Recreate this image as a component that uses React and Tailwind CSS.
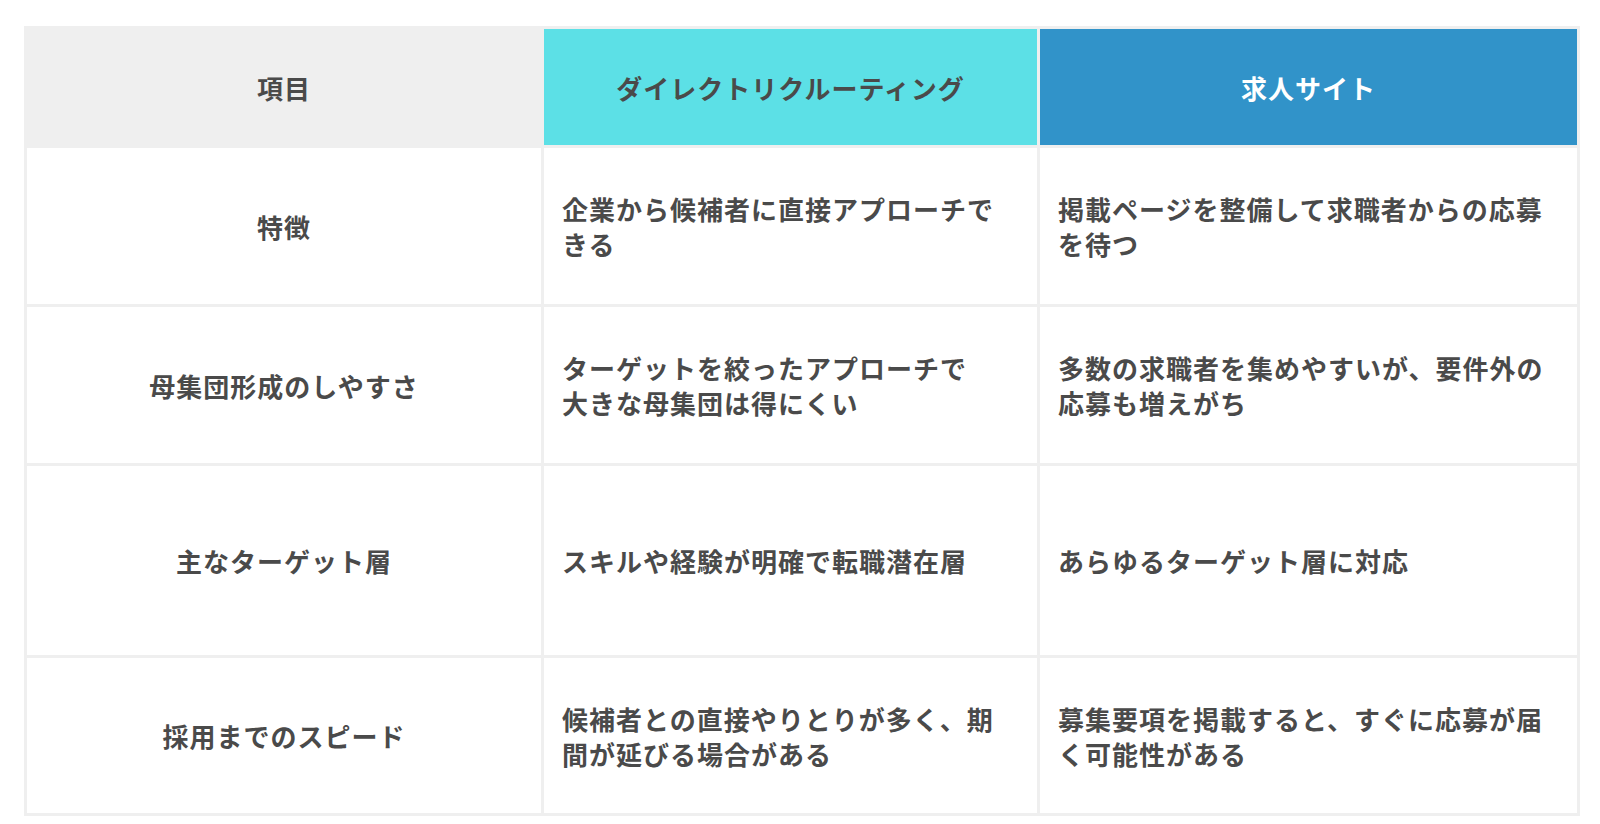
import React from "react";

const font = { fontFamily: '"Noto Sans CJK JP", "Noto Sans", sans-serif' };

const rows = [
  {
    h: "h-[156px]",
    label: "特徴",
    a: ["企業から候補者に直接アプローチで", "きる"],
    b: ["掲載ページを整備して求職者からの応募", "を待つ"],
  },
  {
    h: "h-[156px]",
    label: "母集団形成のしやすさ",
    a: ["ターゲットを絞ったアプローチで", "大きな母集団は得にくい"],
    b: ["多数の求職者を集めやすいが、要件外の", "応募も増えがち"],
  },
  {
    h: "h-[189px]",
    label: "主なターゲット層",
    a: ["スキルや経験が明確で転職潜在層"],
    b: ["あらゆるターゲット層に対応"],
  },
  {
    h: "h-[155px]",
    label: "採用までのスピード",
    a: ["候補者との直接やりとりが多く、期", "間が延びる場合がある"],
    b: ["募集要項を掲載すると、すぐに応募が届", "く可能性がある"],
  },
];

function Lines({ lines }) {
  return (
    <div>
      {lines.map((l, i) => (
        <div key={i} className="whitespace-nowrap">
          {l}
        </div>
      ))}
    </div>
  );
}

export default function App() {
  return (
    <div className="min-h-screen w-full bg-white pt-[26px] pl-[24px]" style={font}>
      <div className="w-[1556px] bg-[#efefef] p-[3px] grid grid-cols-[514px_493px_537px] gap-[3px] text-[26px] leading-[35px] font-bold tracking-[1px] text-[#4a4a4a]">
        <div className="h-[116px] bg-[#efefef] flex items-center justify-center">項目</div>
        <div className="h-[116px] bg-[#5ce0e6] flex items-center justify-center">ダイレクトリクルーティング</div>
        <div className="h-[116px] bg-[#3193c9] flex items-center justify-center text-white">求人サイト</div>
        {rows.map((r, i) => (
          <React.Fragment key={i}>
            <div className={`${r.h} bg-white flex items-center justify-center`}>{r.label}</div>
            <div className={`${r.h} bg-white flex items-center px-[18px]`}>
              <Lines lines={r.a} />
            </div>
            <div className={`${r.h} bg-white flex items-center px-[18px]`}>
              <Lines lines={r.b} />
            </div>
          </React.Fragment>
        ))}
      </div>
    </div>
  );
}
